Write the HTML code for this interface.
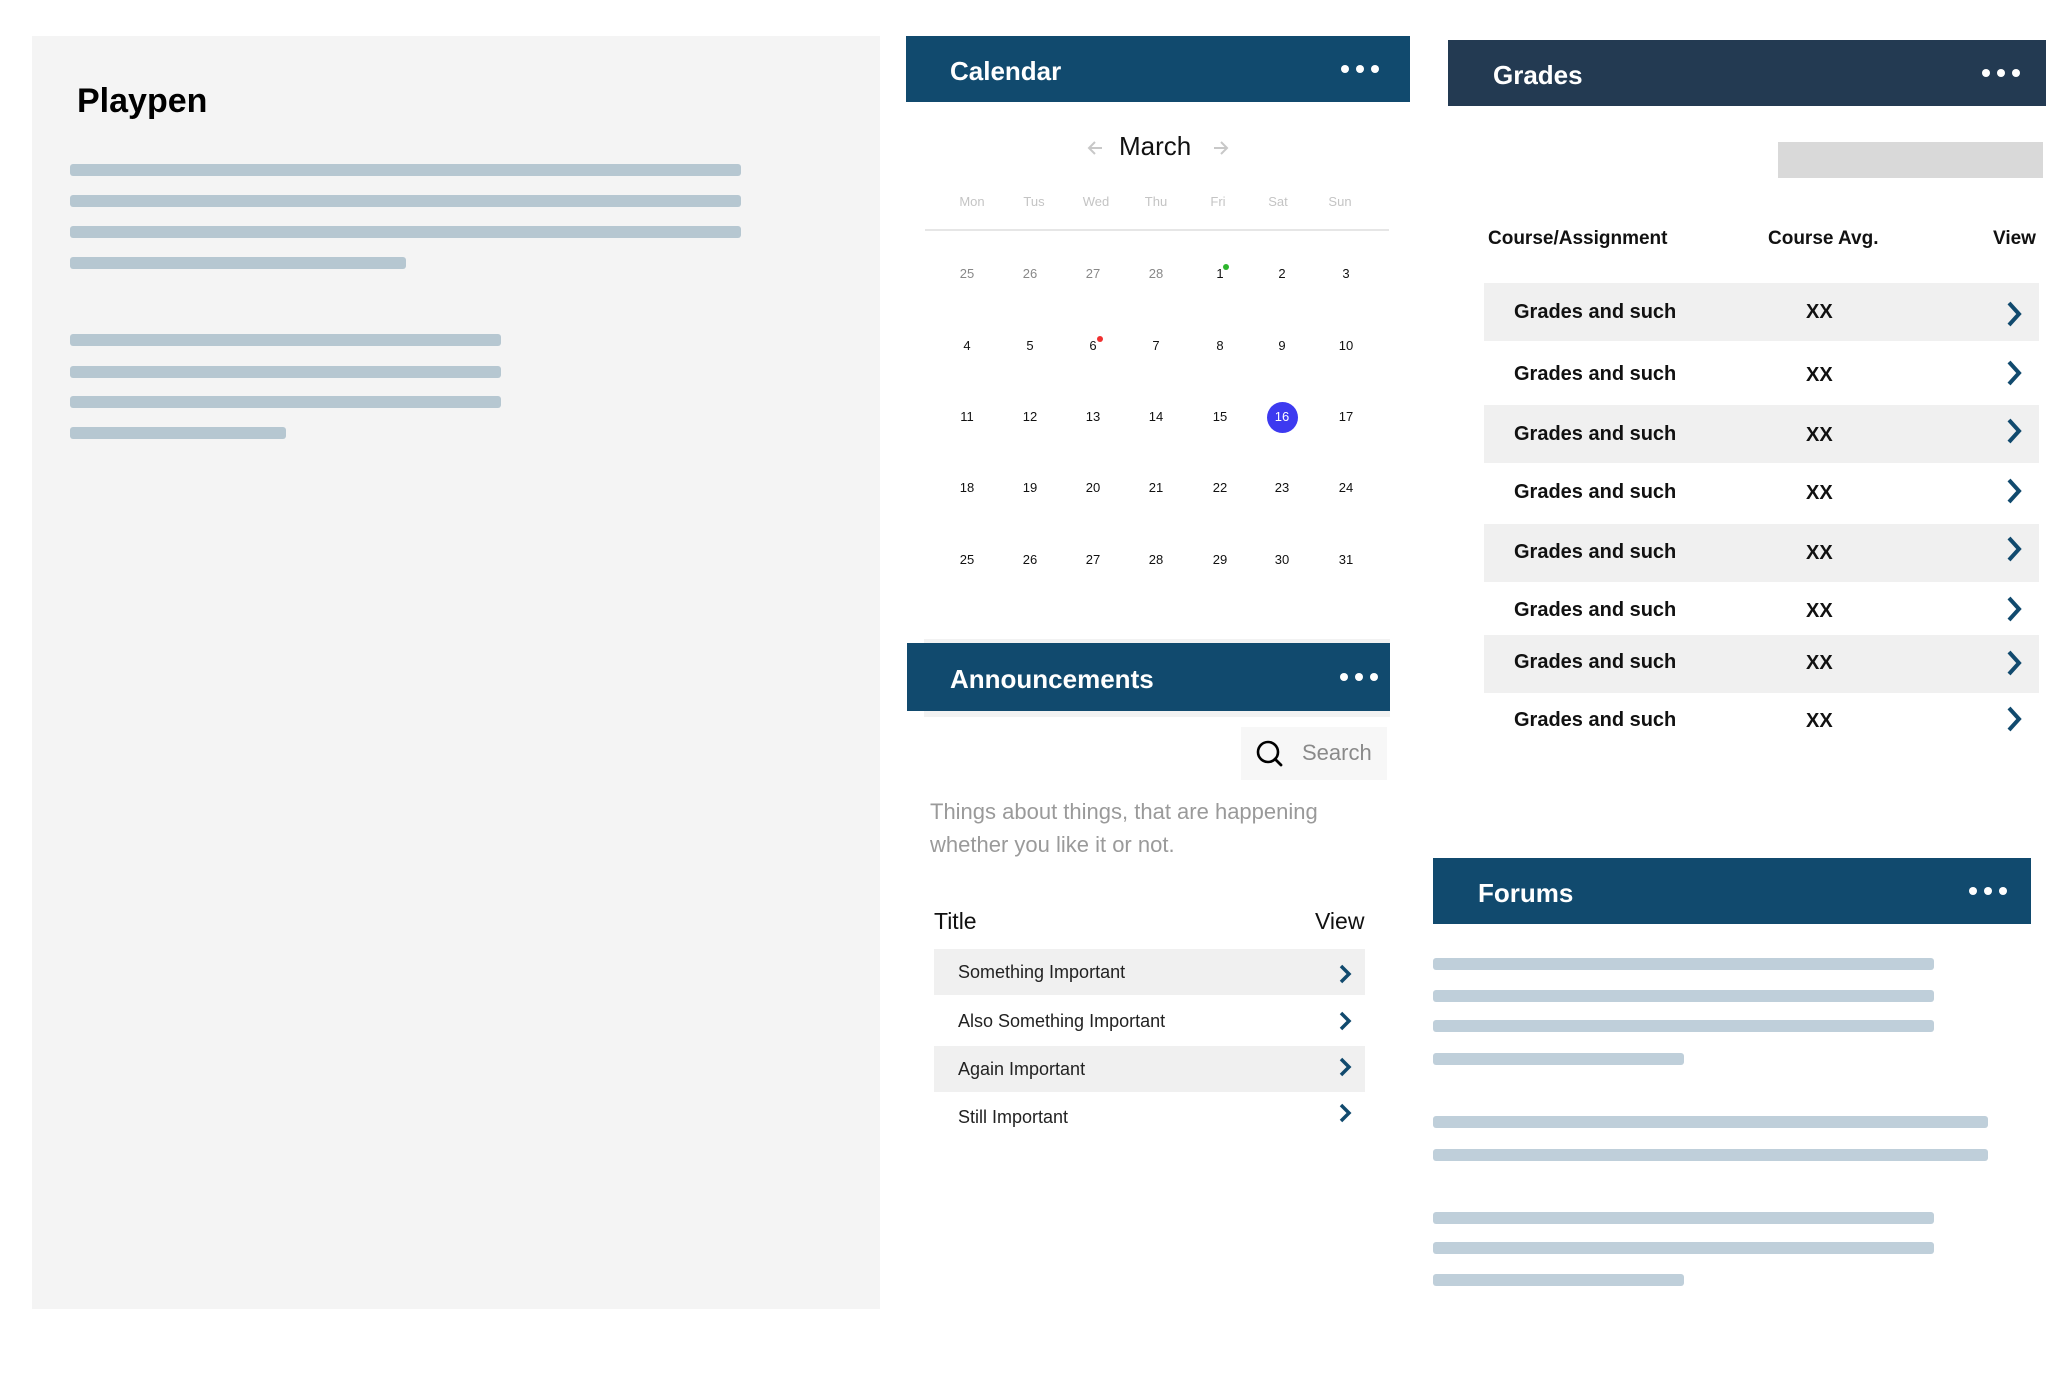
<!DOCTYPE html>
<html><head><meta charset="utf-8">
<style>
*{margin:0;padding:0;box-sizing:border-box}
body{width:2062px;height:1376px;background:#fff;position:relative;overflow:hidden;font-family:"Liberation Sans",Arial,sans-serif}
.a{position:absolute}
.bar{position:absolute;height:12px;border-radius:3px}
.pb{background:#b6c7d1}
.fb{background:#bfcfda}
.hdr{position:absolute;background:#114a6e;color:#fff;font-weight:bold;font-size:26px}
.hdr span.t{position:absolute;top:50%;transform:translateY(-42%)}
.dots{position:absolute;top:50%;transform:translateY(-50%);display:flex;gap:7px}
.dots i{display:block;width:8px;height:8px;border-radius:50%;background:#fff}
.dh{position:absolute;top:194px;font-size:13px;color:#c4c4c4;width:60px;margin-left:-30px;text-align:center}
.d{position:absolute;font-size:13px;color:#111;width:40px;margin-left:-20px;text-align:center;line-height:16px}
.g{color:#888}
.row{position:absolute;left:1484px;width:555px;height:58px}
.gr{background:#f0f0f0}
.rt{position:absolute;left:1514px;font-size:20px;font-weight:bold;color:#111;line-height:24px}
.xx{position:absolute;left:1806px;font-size:20px;font-weight:bold;color:#111;line-height:24px}
.chev{position:absolute}
.an{position:absolute;left:958px;font-size:18px;color:#222;line-height:22px}
</style></head><body>

<div class="a" style="left:32px;top:36px;width:848px;height:1273px;background:#f4f4f4"></div>
<div class="a" style="left:77px;top:81px;font-size:34px;font-weight:bold;color:#000;line-height:40px">Playpen</div>
<div class="bar pb" style="left:70px;top:164px;width:671px"></div>
<div class="bar pb" style="left:70px;top:195px;width:671px"></div>
<div class="bar pb" style="left:70px;top:226px;width:671px"></div>
<div class="bar pb" style="left:70px;top:257px;width:336px"></div>
<div class="bar pb" style="left:70px;top:334px;width:431px"></div>
<div class="bar pb" style="left:70px;top:366px;width:431px"></div>
<div class="bar pb" style="left:70px;top:396px;width:431px"></div>
<div class="bar pb" style="left:70px;top:427px;width:216px"></div>

<!-- Calendar -->
<div class="hdr" style="left:906px;top:36px;width:504px;height:66px"><span class="t" style="left:44px">Calendar</span><div class="dots" style="right:31px"><i></i><i></i><i></i></div></div>
<svg class="a" style="left:1086px;top:140px" width="18" height="16" viewBox="0 0 18 16"><path d="M16 8 H3 M9 2 L3 8 L9 14" fill="none" stroke="#c8c8c8" stroke-width="2"/></svg>
<div class="a" style="left:1119px;top:131px;font-size:26px;color:#111;line-height:30px">March</div>
<svg class="a" style="left:1212px;top:140px" width="18" height="16" viewBox="0 0 18 16"><path d="M2 8 H15 M9 2 L15 8 L9 14" fill="none" stroke="#c8c8c8" stroke-width="2"/></svg>
<div class="dh" style="left:972px">Mon</div><div class="dh" style="left:1034px">Tus</div><div class="dh" style="left:1096px">Wed</div><div class="dh" style="left:1156px">Thu</div><div class="dh" style="left:1218px">Fri</div><div class="dh" style="left:1278px">Sat</div><div class="dh" style="left:1340px">Sun</div>
<div class="a" style="left:925px;top:229px;width:464px;height:2px;background:#e6e6e6"></div>

<div class="d g" style="left:967px;top:266px">25</div><div class="d g" style="left:1030px;top:266px">26</div><div class="d g" style="left:1093px;top:266px">27</div><div class="d g" style="left:1156px;top:266px">28</div><div class="d" style="left:1220px;top:266px">1</div><div class="d" style="left:1282px;top:266px">2</div><div class="d" style="left:1346px;top:266px">3</div>
<div class="a" style="left:1223px;top:264px;width:6px;height:6px;border-radius:50%;background:#2db52d"></div>
<div class="d" style="left:967px;top:338px">4</div><div class="d" style="left:1030px;top:338px">5</div><div class="d" style="left:1093px;top:338px">6</div><div class="d" style="left:1156px;top:338px">7</div><div class="d" style="left:1220px;top:338px">8</div><div class="d" style="left:1282px;top:338px">9</div><div class="d" style="left:1346px;top:338px">10</div>
<div class="a" style="left:1097px;top:336px;width:6px;height:6px;border-radius:50%;background:#f03030"></div>
<div class="a" style="left:1267px;top:402px;width:31px;height:31px;border-radius:50%;background:#3d3af0"></div>
<div class="d" style="left:967px;top:409px">11</div><div class="d" style="left:1030px;top:409px">12</div><div class="d" style="left:1093px;top:409px">13</div><div class="d" style="left:1156px;top:409px">14</div><div class="d" style="left:1220px;top:409px">15</div><div class="d" style="left:1282px;top:409px;color:#fff">16</div><div class="d" style="left:1346px;top:409px">17</div>
<div class="d" style="left:967px;top:480px">18</div><div class="d" style="left:1030px;top:480px">19</div><div class="d" style="left:1093px;top:480px">20</div><div class="d" style="left:1156px;top:480px">21</div><div class="d" style="left:1220px;top:480px">22</div><div class="d" style="left:1282px;top:480px">23</div><div class="d" style="left:1346px;top:480px">24</div>
<div class="d" style="left:967px;top:552px">25</div><div class="d" style="left:1030px;top:552px">26</div><div class="d" style="left:1093px;top:552px">27</div><div class="d" style="left:1156px;top:552px">28</div><div class="d" style="left:1220px;top:552px">29</div><div class="d" style="left:1282px;top:552px">30</div><div class="d" style="left:1346px;top:552px">31</div>

<!-- Announcements -->
<div class="a" style="left:924px;top:639px;width:466px;height:78px;background:#f2f2f2"></div>
<div class="hdr" style="left:907px;top:643px;width:483px;height:68px"><span class="t" style="left:43px">Announcements</span><div class="dots" style="right:12px"><i></i><i></i><i></i></div></div>
<div class="a" style="left:1241px;top:727px;width:146px;height:53px;background:#f7f7f7"></div>
<svg class="a" style="left:1254px;top:738px" width="32" height="32" viewBox="0 0 32 32"><circle cx="14" cy="14" r="10" fill="none" stroke="#000" stroke-width="2.6"/><path d="M21 21 L27 27" stroke="#000" stroke-width="2.8" stroke-linecap="round"/></svg>
<div class="a" style="left:1302px;top:740px;font-size:22px;color:#8a8a8a;line-height:26px">Search</div>
<div class="a" style="left:930px;top:795px;font-size:22px;color:#9a9a9a;line-height:33px">Things about things, that are happening<br>whether you like it or not.</div>
<div class="a" style="left:934px;top:908px;font-size:23px;color:#111;line-height:26px">Title</div>
<div class="a" style="left:1315px;top:908px;font-size:23px;color:#111;line-height:26px">View</div>
<div class="a gr" style="left:934px;top:949px;width:431px;height:46px"></div>
<div class="a gr" style="left:934px;top:1046px;width:431px;height:46px"></div>
<div class="an" style="top:961px">Something Important</div>
<div class="an" style="top:1010px">Also Something Important</div>
<div class="an" style="top:1058px">Again Important</div>
<div class="an" style="top:1106px">Still Important</div>
<svg class="chev" style="left:1337px;top:964px" width="16" height="20" viewBox="0 0 16 20"><path d="M4 2 L12 10 L4 18" fill="none" stroke="#114a6e" stroke-width="3.5"/></svg>
<svg class="chev" style="left:1337px;top:1011px" width="16" height="20" viewBox="0 0 16 20"><path d="M4 2 L12 10 L4 18" fill="none" stroke="#114a6e" stroke-width="3.5"/></svg>
<svg class="chev" style="left:1337px;top:1057px" width="16" height="20" viewBox="0 0 16 20"><path d="M4 2 L12 10 L4 18" fill="none" stroke="#114a6e" stroke-width="3.5"/></svg>
<svg class="chev" style="left:1337px;top:1103px" width="16" height="20" viewBox="0 0 16 20"><path d="M4 2 L12 10 L4 18" fill="none" stroke="#114a6e" stroke-width="3.5"/></svg>

<!-- Grades -->
<div class="hdr" style="left:1448px;top:40px;width:598px;height:66px;background:#233a52"><span class="t" style="left:45px">Grades</span><div class="dots" style="right:26px"><i></i><i></i><i></i></div></div>
<div class="a" style="left:1778px;top:142px;width:265px;height:36px;background:#d9d9d9"></div>
<div class="a" style="left:1488px;top:228px;font-size:19px;font-weight:bold;color:#111;line-height:22px">Course/Assignment</div>
<div class="a" style="left:1768px;top:228px;font-size:19px;font-weight:bold;color:#111;line-height:22px">Course Avg.</div>
<div class="a" style="left:1993px;top:228px;font-size:19px;font-weight:bold;color:#111;line-height:22px">View</div>
<div class="row gr" style="top:283px"></div>
<div class="row gr" style="top:405px"></div>
<div class="row gr" style="top:524px"></div>
<div class="row gr" style="top:635px"></div>
<div class="rt" style="top:300px">Grades and such</div><div class="xx" style="top:300px">XX</div>
<div class="rt" style="top:362px">Grades and such</div><div class="xx" style="top:363px">XX</div>
<div class="rt" style="top:422px">Grades and such</div><div class="xx" style="top:423px">XX</div>
<div class="rt" style="top:480px">Grades and such</div><div class="xx" style="top:481px">XX</div>
<div class="rt" style="top:540px">Grades and such</div><div class="xx" style="top:541px">XX</div>
<div class="rt" style="top:598px">Grades and such</div><div class="xx" style="top:599px">XX</div>
<div class="rt" style="top:650px">Grades and such</div><div class="xx" style="top:651px">XX</div>
<div class="rt" style="top:708px">Grades and such</div><div class="xx" style="top:709px">XX</div>
<svg class="chev" style="left:2005px;top:301px" width="18" height="26" viewBox="0 0 18 26"><path d="M4 2 L14 13 L4 24" fill="none" stroke="#114a6e" stroke-width="4"/></svg>
<svg class="chev" style="left:2005px;top:360px" width="18" height="26" viewBox="0 0 18 26"><path d="M4 2 L14 13 L4 24" fill="none" stroke="#114a6e" stroke-width="4"/></svg>
<svg class="chev" style="left:2005px;top:418px" width="18" height="26" viewBox="0 0 18 26"><path d="M4 2 L14 13 L4 24" fill="none" stroke="#114a6e" stroke-width="4"/></svg>
<svg class="chev" style="left:2005px;top:478px" width="18" height="26" viewBox="0 0 18 26"><path d="M4 2 L14 13 L4 24" fill="none" stroke="#114a6e" stroke-width="4"/></svg>
<svg class="chev" style="left:2005px;top:536px" width="18" height="26" viewBox="0 0 18 26"><path d="M4 2 L14 13 L4 24" fill="none" stroke="#114a6e" stroke-width="4"/></svg>
<svg class="chev" style="left:2005px;top:596px" width="18" height="26" viewBox="0 0 18 26"><path d="M4 2 L14 13 L4 24" fill="none" stroke="#114a6e" stroke-width="4"/></svg>
<svg class="chev" style="left:2005px;top:650px" width="18" height="26" viewBox="0 0 18 26"><path d="M4 2 L14 13 L4 24" fill="none" stroke="#114a6e" stroke-width="4"/></svg>
<svg class="chev" style="left:2005px;top:706px" width="18" height="26" viewBox="0 0 18 26"><path d="M4 2 L14 13 L4 24" fill="none" stroke="#114a6e" stroke-width="4"/></svg>

<!-- Forums -->
<div class="hdr" style="left:1433px;top:858px;width:598px;height:66px"><span class="t" style="left:45px">Forums</span><div class="dots" style="right:24px"><i></i><i></i><i></i></div></div>
<div class="bar fb" style="left:1433px;top:958px;width:501px"></div>
<div class="bar fb" style="left:1433px;top:990px;width:501px"></div>
<div class="bar fb" style="left:1433px;top:1020px;width:501px"></div>
<div class="bar fb" style="left:1433px;top:1053px;width:251px"></div>
<div class="bar fb" style="left:1433px;top:1116px;width:555px"></div>
<div class="bar fb" style="left:1433px;top:1149px;width:555px"></div>
<div class="bar fb" style="left:1433px;top:1212px;width:501px"></div>
<div class="bar fb" style="left:1433px;top:1242px;width:501px"></div>
<div class="bar fb" style="left:1433px;top:1274px;width:251px"></div>

</body></html>
